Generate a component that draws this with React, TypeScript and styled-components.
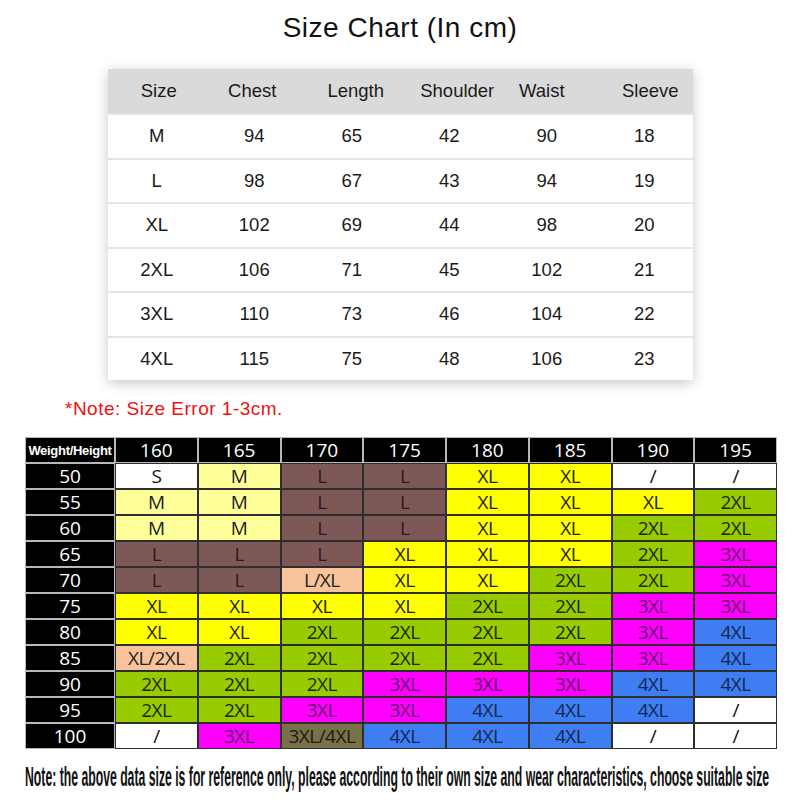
import React from "react";
import styled, { createGlobalStyle } from "styled-components";

const Global = createGlobalStyle`
  html, body { margin: 0; padding: 0; background: #ffffff; }
  body { font-family: "Liberation Sans", Arial, sans-serif; }
`;

const Page = styled.div`
  width: 800px;
  height: 800px;
  display: flex;
  flex-direction: column;
  background: #fff;
  overflow: hidden;
`;

const Title = styled.h1`
  margin: 0;
  height: 56px;
  line-height: 56px;
  text-align: center;
  font-family: "Liberation Sans", Arial, sans-serif;
  font-weight: 400;
  font-size: 28px;
  letter-spacing: 0.5px;
  color: #111;
`;

const MeasureCard = styled.div`
  margin: 13px 0 0 108px;
  width: 585px;
  background: #fff;
  box-shadow: 0 3px 12px rgba(0, 0, 0, 0.22);
  display: flex;
  flex-direction: column;
`;

const MeasureRow = styled.div<{ $head?: boolean }>`
  display: grid;
  grid-template-columns: repeat(6, 1fr);
  height: ${(p) => (p.$head ? "44px" : "44.5px")};
  background: ${(p) => (p.$head ? "#dadada" : "#fff")};
  border-top: ${(p) => (p.$head ? "none" : "2px solid #e4e4e4")};
  box-sizing: border-box;
  align-items: center;
`;

const MeasureCell = styled.div<{ $shift?: number }>`
  text-align: center;
  font-size: 18.5px;
  color: #1a1a1a;
  transform: translateX(${(p) => p.$shift ?? 0}px);
`;

const ErrorNote = styled.div`
  margin: 17px 0 0 65px;
  height: 24px;
  line-height: 24px;
  font-size: 19px;
  letter-spacing: 0.5px;
  color: #ee1111;
`;

const SizeGrid = styled.div`
  margin: 16px 0 0 25px;
  width: 752px;
  display: grid;
  grid-template-columns: 90px repeat(8, 1fr);
  grid-auto-rows: 26px;
`;

const HeadCell = styled.div<{ $small?: boolean }>`
  background: #000;
  color: #fff;
  border: 1px solid #b8b8b8;
  box-sizing: border-box;
  display: flex;
  align-items: center;
  justify-content: center;
  white-space: nowrap;
  font-family: ${(p) =>
    p.$small ? '"Liberation Sans", Arial, sans-serif' : '"Open Sans", sans-serif'};
  font-weight: ${(p) => (p.$small ? 700 : 400)};
  font-size: ${(p) => (p.$small ? "13px" : "19px")};
  letter-spacing: ${(p) => (p.$small ? "-0.3px" : "0")};
`;

const SizeCell = styled.div<{ $bg: string; $fg: string }>`
  background: ${(p) => p.$bg};
  color: ${(p) => p.$fg};
  border: 1px solid #2e2e2e;
  box-sizing: border-box;
  display: flex;
  align-items: center;
  justify-content: center;
  font-family: "Open Sans", sans-serif;
  font-size: 19px;
  letter-spacing: -0.5px;
`;

const FooterNote = styled.div`
  margin: 12px 0 0 25px;
  height: 32px;
  line-height: 32px;
  white-space: nowrap;
  font-family: "Liberation Sans Narrow", "Liberation Sans", Arial, sans-serif;
  font-weight: 700;
  font-size: 27px;
  color: #111;
  transform-origin: left center;
  transform: scaleX(0.453);
`;

const measureHead = [
  { t: "Size", s: 2 },
  { t: "Chest", s: -2 },
  { t: "Length", s: 4 },
  { t: "Shoulder", s: 8 },
  { t: "Waist", s: -5 },
  { t: "Sleeve", s: 6 },
];

const measureRows = [
  ["M", "94", "65", "42", "90", "18"],
  ["L", "98", "67", "43", "94", "19"],
  ["XL", "102", "69", "44", "98", "20"],
  ["2XL", "106", "71", "45", "102", "21"],
  ["3XL", "110", "73", "46", "104", "22"],
  ["4XL", "115", "75", "48", "106", "23"],
];

const palette: Record<string, [string, string]> = {
  S: ["#ffffff", "#111"],
  "/": ["#ffffff", "#111"],
  M: ["#ffff99", "#222"],
  L: ["#7e5757", "#2a1a1a"],
  XL: ["#ffff00", "#222"],
  "2XL": ["#99cc00", "#1c2600"],
  "3XL": ["#ff00ff", "#5a0a64"],
  "4XL": ["#3f7ef2", "#142650"],
  "L/XL": ["#f9c39b", "#222"],
  "XL/2XL": ["#f9c39b", "#222"],
  "3XL/4XL": ["#7a7049", "#1e1a0c"],
};

const heights = ["160", "165", "170", "175", "180", "185", "190", "195"];

const sizeRows: [string, string[]][] = [
  ["50", ["S", "M", "L", "L", "XL", "XL", "/", "/"]],
  ["55", ["M", "M", "L", "L", "XL", "XL", "XL", "2XL"]],
  ["60", ["M", "M", "L", "L", "XL", "XL", "2XL", "2XL"]],
  ["65", ["L", "L", "L", "XL", "XL", "XL", "2XL", "3XL"]],
  ["70", ["L", "L", "L/XL", "XL", "XL", "2XL", "2XL", "3XL"]],
  ["75", ["XL", "XL", "XL", "XL", "2XL", "2XL", "3XL", "3XL"]],
  ["80", ["XL", "XL", "2XL", "2XL", "2XL", "2XL", "3XL", "4XL"]],
  ["85", ["XL/2XL", "2XL", "2XL", "2XL", "2XL", "3XL", "3XL", "4XL"]],
  ["90", ["2XL", "2XL", "2XL", "3XL", "3XL", "3XL", "4XL", "4XL"]],
  ["95", ["2XL", "2XL", "3XL", "3XL", "4XL", "4XL", "4XL", "/"]],
  ["100", ["/", "3XL", "3XL/4XL", "4XL", "4XL", "4XL", "/", "/"]],
];

export default function App() {
  return (
    <>
      <Global />
      <Page>
        <Title>Size Chart (In cm)</Title>
        <MeasureCard>
          <MeasureRow $head>
            {measureHead.map((h) => (
              <MeasureCell key={h.t} $shift={h.s}>
                {h.t}
              </MeasureCell>
            ))}
          </MeasureRow>
          {measureRows.map((r) => (
            <MeasureRow key={r[0]}>
              {r.map((v, i) => (
                <MeasureCell key={i}>{v}</MeasureCell>
              ))}
            </MeasureRow>
          ))}
        </MeasureCard>
        <ErrorNote>*Note: Size Error 1-3cm.</ErrorNote>
        <SizeGrid>
          <HeadCell $small>Weight/Height</HeadCell>
          {heights.map((h) => (
            <HeadCell key={h}>{h}</HeadCell>
          ))}
          {sizeRows.map(([w, cells]) => (
            <React.Fragment key={w}>
              <HeadCell>{w}</HeadCell>
              {cells.map((c, i) => {
                const [bg, fg] = palette[c];
                return (
                  <SizeCell key={i} $bg={bg} $fg={fg}>
                    {c}
                  </SizeCell>
                );
              })}
            </React.Fragment>
          ))}
        </SizeGrid>
        <FooterNote>
          Note: the above data size is for reference only, please according to their own size and wear characteristics, choose suitable size
        </FooterNote>
      </Page>
    </>
  );
}
